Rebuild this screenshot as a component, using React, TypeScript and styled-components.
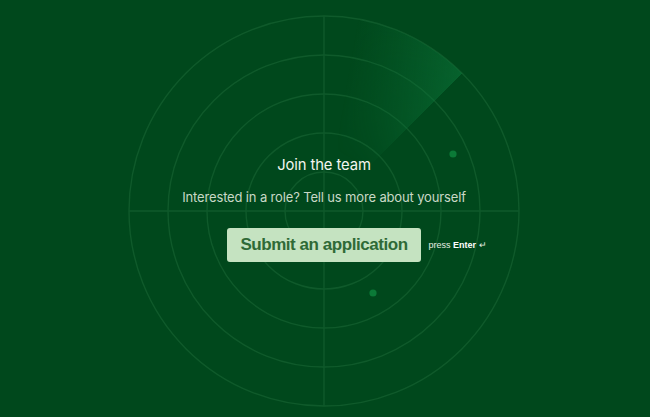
import React from "react";
import styled, { createGlobalStyle } from "styled-components";

const GlobalStyle = createGlobalStyle`
  html, body {
    margin: 0;
    padding: 0;
    background: #00481c;
  }
  body {
    font-family: Inter, "Liberation Sans", Arial, sans-serif;
  }
`;

const Page = styled.div`
  width: 100vw;
  height: 417px;
  display: flex;
  align-items: center;
  justify-content: center;
  padding: 5px 2px 0 0;
  box-sizing: border-box;
  background: #00481c;
  overflow: hidden;
`;

const Stage = styled.div`
  position: relative;
  width: 400px;
  height: 400px;
  display: flex;
  flex-direction: column;
  align-items: center;
  justify-content: center;
`;

const Grid = styled.svg`
  position: absolute;
  inset: 0;
  width: 100%;
  height: 100%;
`;

const Sweep = styled.div`
  position: absolute;
  left: 5px;
  top: 5px;
  width: 390px;
  height: 390px;
  border-radius: 50%;
  background: conic-gradient(
    from 0deg,
    rgba(12, 120, 60, 0) 10deg,
    rgba(12, 120, 60, 0.55) 45deg,
    rgba(12, 120, 60, 0) 45deg
  );
  -webkit-mask-image: radial-gradient(closest-side, transparent 30%, rgba(0,0,0,0.5) 60%, #000 100%);
  mask-image: radial-gradient(closest-side, transparent 30%, rgba(0,0,0,0.5) 60%, #000 100%);
`;

const Content = styled.div`
  position: relative;
  display: flex;
  flex-direction: column;
  align-items: center;
  margin-top: -4px;
`;

const Title = styled.h1`
  margin: 0;
  font-size: 14.8px;
  line-height: 18px;
  font-weight: 400;
  color: #f3f6ef;
  letter-spacing: -0.1px;
`;

const Subtitle = styled.p`
  margin: 15px 0 0;
  font-size: 13px;
  line-height: 16px;
  letter-spacing: -0.15px;
  font-weight: 400;
  color: #c9d8c6;
  white-space: nowrap;
`;

const Action = styled.div`
  position: relative;
  margin-top: 23px;
`;

const Button = styled.button`
  display: block;
  height: 34px;
  padding: 0 13px;
  border: none;
  border-radius: 3px;
  background: #c5e3c1;
  color: #2f6a36;
  font-family: "Liberation Sans", Arial, sans-serif;
  font-size: 17px;
  letter-spacing: -0.45px;
  font-weight: 700;
  cursor: pointer;
`;

const Hint = styled.span`
  position: absolute;
  left: calc(100% + 8px);
  top: 50%;
  transform: translateY(-50%);
  white-space: nowrap;
  font-family: "Liberation Sans", Arial, sans-serif;
  font-size: 9px;
  color: #e6eee3;
  b {
    font-weight: 700;
    color: #ffffff;
  }
`;

const rings = [39, 78, 117, 156, 195];

const App = () => {
  return (
    <>
      <GlobalStyle />
      <Page>
        <Stage>
          <Grid viewBox="-200 -200 400 400">
            {rings.map((r) => (
              <circle key={r} cx={0} cy={0} r={r} fill="none" stroke="#0f5a2b" strokeWidth={1.4} />
            ))}
            <line x1={0} y1={-195} x2={0} y2={195} stroke="#0f5a2b" strokeWidth={1.4} />
            <line x1={-195} y1={0} x2={195} y2={0} stroke="#0f5a2b" strokeWidth={1.4} />
          </Grid>
          <Sweep />
          <Grid viewBox="-200 -200 400 400">
            <circle cx={129} cy={-57} r={3.6} fill="#0b7a37" />
            <circle cx={49} cy={82} r={3.6} fill="#0b7a37" />
          </Grid>
          <Content>
            <Title>Join the team</Title>
            <Subtitle>Interested in a role? Tell us more about yourself</Subtitle>
            <Action>
              <Button>Submit an application</Button>
              <Hint>
                press <b>Enter</b> ↵
              </Hint>
            </Action>
          </Content>
        </Stage>
      </Page>
    </>
  );
};

export default App;
